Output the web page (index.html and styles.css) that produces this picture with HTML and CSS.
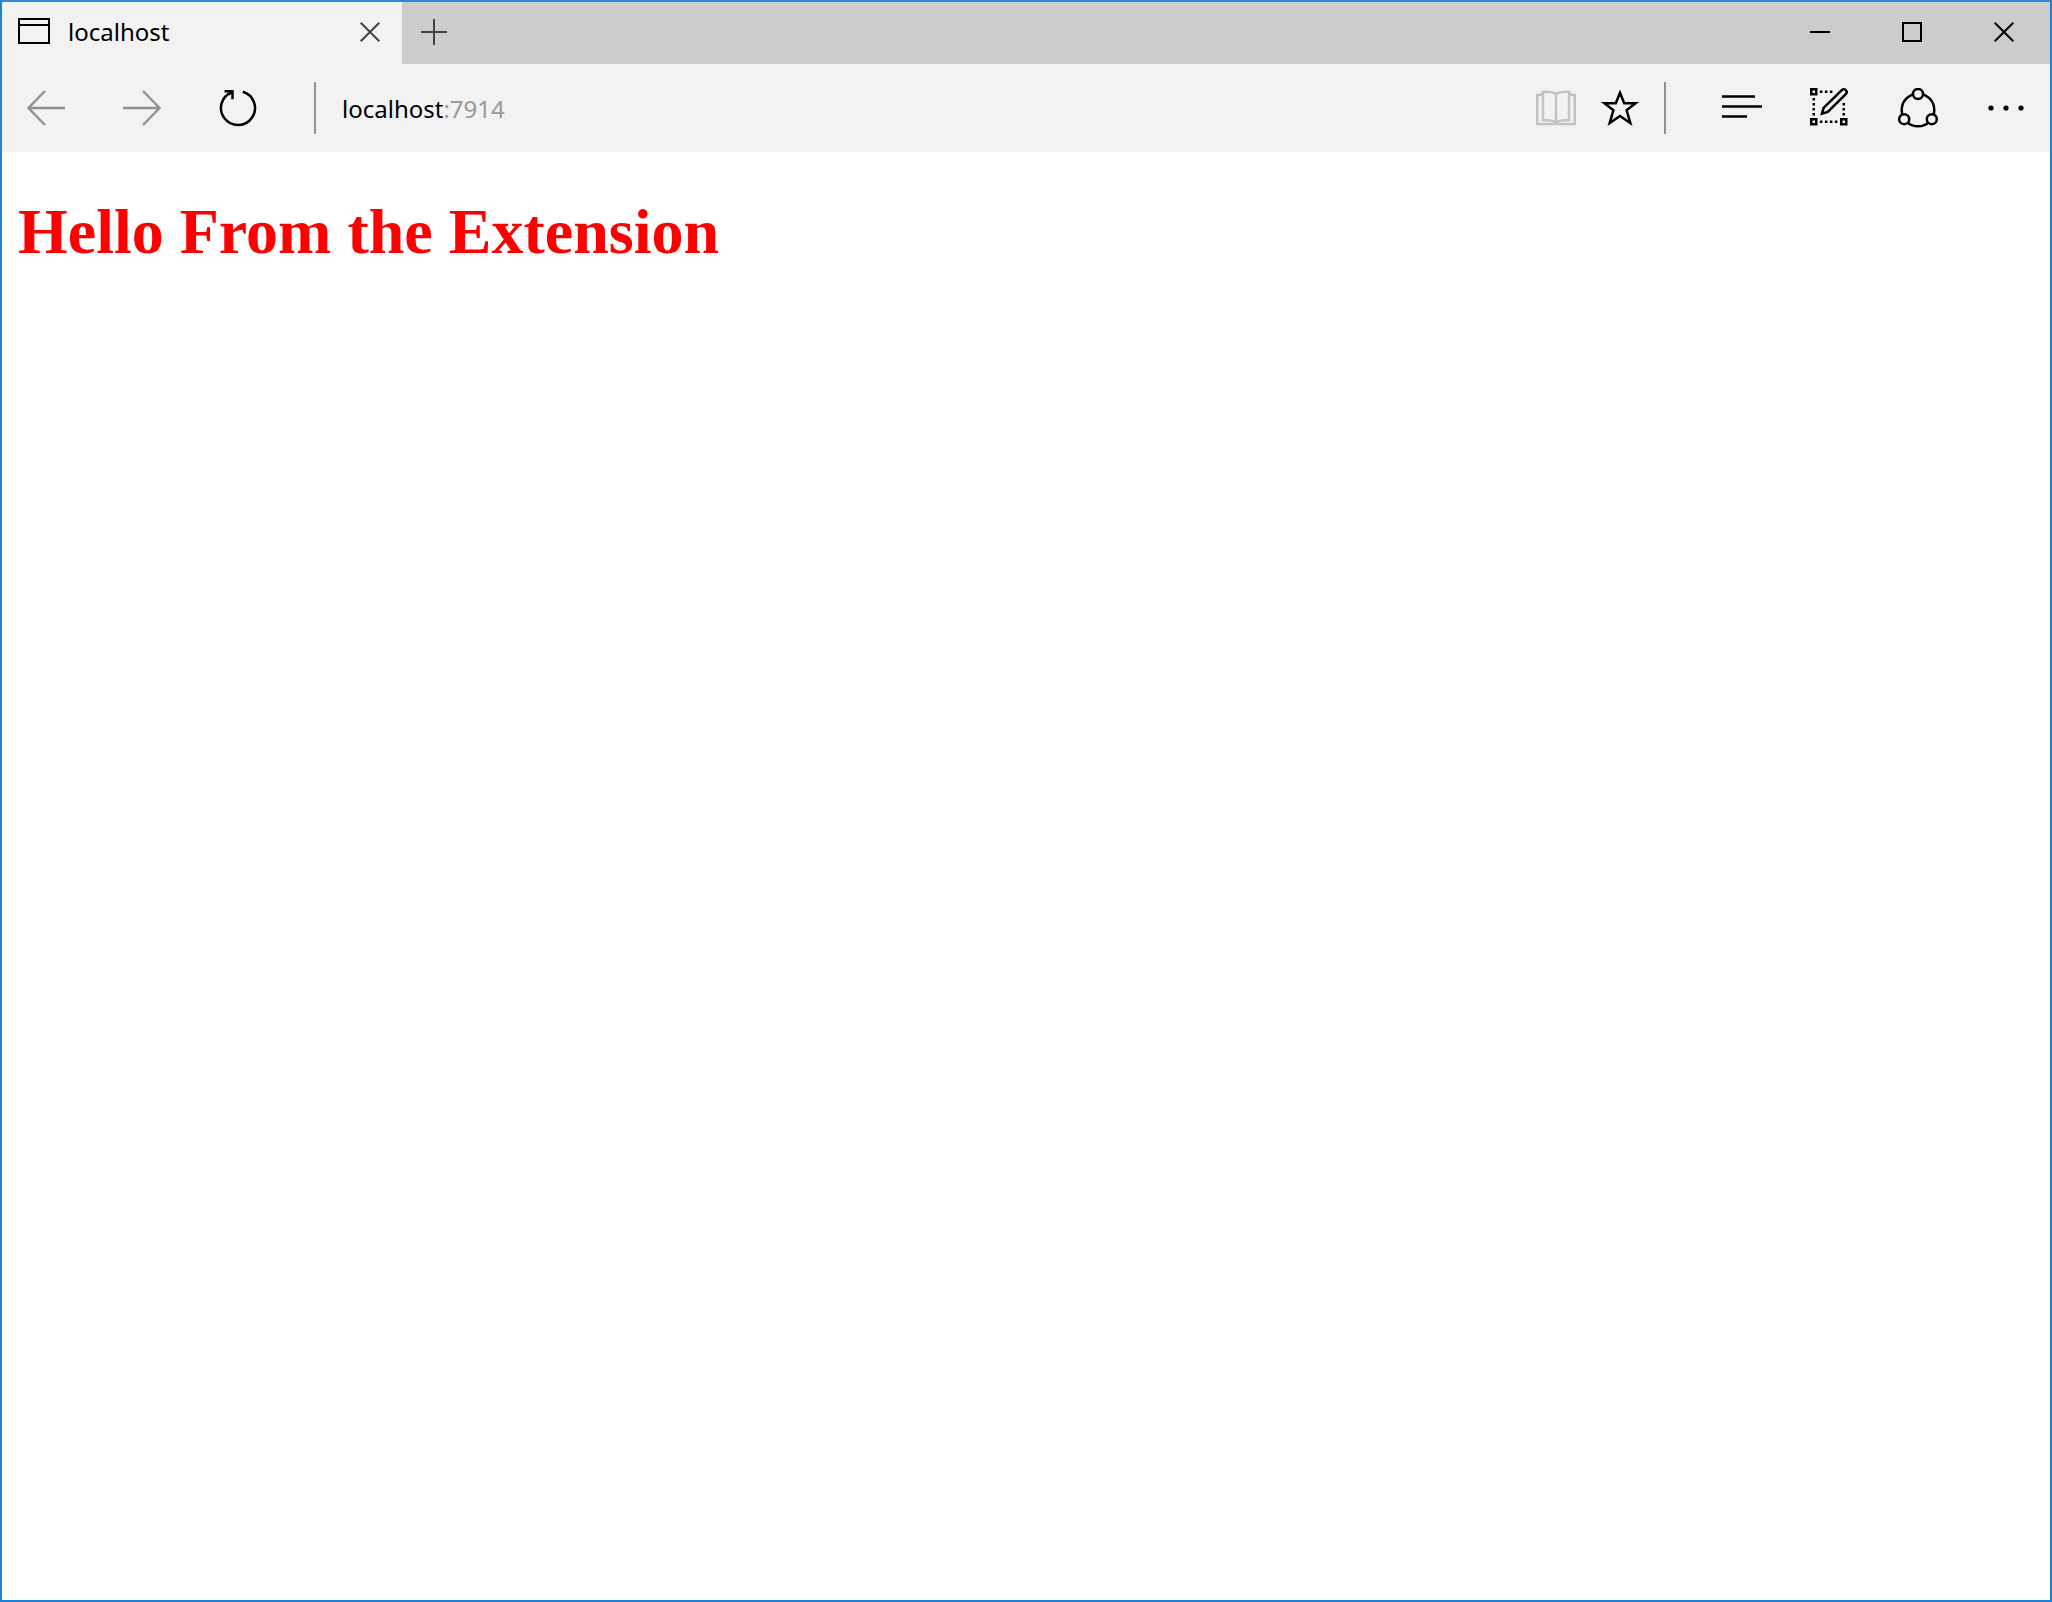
FILE: index.html
```html
<!DOCTYPE html>
<html lang="en">
<head>
<meta charset="utf-8">
<title>localhost</title>
<link rel="stylesheet" href="styles.css">
</head>
<body>
<div class="window">
  <header class="tabstrip">
    <div class="tab">
      <svg class="tab-icon" width="32" height="28" viewBox="0 0 32 28"><path d="M1 1H31V25H1ZM1 7H31"/></svg>
      <span class="tab-title">localhost</span>
      <button class="tab-close" type="button" aria-label="Close tab">
        <svg class="thin" width="20" height="20" viewBox="0 0 20 20"><path d="M.7 .7L19.3 19.3M19.3 .7L.7 19.3"/></svg>
      </button>
    </div>
    <button class="new-tab" type="button" aria-label="New tab">
      <svg class="thin" width="26" height="26" viewBox="0 0 26 26"><path d="M13 0V26M0 13H26"/></svg>
    </button>
    <div class="window-controls">
      <button class="control" type="button" aria-label="Minimize">
        <svg width="20" height="20" viewBox="0 0 20 20"><path d="M0 10H20"/></svg>
      </button>
      <button class="control" type="button" aria-label="Maximize">
        <svg width="20" height="20" viewBox="0 0 20 20"><path d="M1 1H19V19H1Z"/></svg>
      </button>
      <button class="control" type="button" aria-label="Close">
        <svg width="20" height="20" viewBox="0 0 20 20"><path d="M.7 .7L19.3 19.3M19.3 .7L.7 19.3"/></svg>
      </button>
    </div>
  </header>

  <nav class="toolbar">
    <div class="navigation">
      <button class="tool disabled" type="button" aria-label="Back" disabled>
        <svg class="heavy" width="40" height="40" viewBox="0 0 40 40"><path d="M39 20H3M19 3L2.500 20L19 37"/></svg>
      </button>
      <button class="tool disabled" type="button" aria-label="Forward" disabled>
        <svg class="heavy" width="40" height="40" viewBox="0 0 40 40"><path d="M1 20H37M21 3L37.500 20L21 37"/></svg>
      </button>
      <button class="tool" type="button" aria-label="Refresh">
        <svg class="heavy" width="40" height="40" viewBox="0 0 40 40"><path d="M24.800 3.700A17 17 0 1 1 14 4.100"/><path d="M6.500 3.200H14.500V11.200M10.500 6.500L14.500 3.200"/></svg>
      </button>
    </div>
    <span class="separator"></span>
    <div class="address">
      <input class="host" type="text" value="localhost" aria-label="Address" spellcheck="false">
      <span class="port">:7914</span>
    </div>
    <button class="tool compact faded" type="button" aria-label="Reading view" disabled>
      <svg class="heavy" width="40" height="40" viewBox="0 0 40 40"><path d="M6 4.500V7H1.250V36H38.750V7H34V4.500M20 6C17 3.500 13 3.500 7 3.700V32C13 32 17 32 20 34.500C23 32 27 32 33 32V3.700C27 3.500 23 3.500 20 6V34"/></svg>
    </button>
    <button class="tool compact" type="button" aria-label="Add to favorites">
      <svg width="40" height="40" viewBox="0 0 40 40"><path class="star" d="M20 4.800L24.200 15.300H35.500L26.600 22.300L30.300 35L20 28L9.700 35L13.400 22.300L4.500 15.300H15.800Z"/></svg>
    </button>
    <span class="separator after-star"></span>
    <button class="tool" type="button" aria-label="Hub">
      <svg width="40" height="40" viewBox="0 0 40 40"><path class="heavy" d="M0 8.600H33M0 18.600H40M0 28.600H25"/></svg>
    </button>
    <button class="tool" type="button" aria-label="Make a web note">
      <svg width="40" height="40" viewBox="0 0 40 40"><path class="heavy" d="M1.250 1.250H6.250V6.250H1.250ZM1.250 31.250H6.250V36.250H1.250ZM31.250 31.250H36.250V36.250H31.250ZM12 25.600L13.600 19.800L31.800 2.200A2.800 2.800 0 0 1 35.800 6.200L17.800 24Z"/><path class="heavy dots" d="M9.900 3.750H23M3.750 9.900V28M33.750 14.900V28M9.900 33.750H28"/></svg>
    </button>
    <button class="tool" type="button" aria-label="Share">
      <svg class="heavy" width="40" height="40" viewBox="0 0 40 40"><circle cx="20" cy="22" r="16.300"/><g class="nodes"><circle cx="20" cy="6" r="5"/><circle cx="6.200" cy="31.200" r="5"/><circle cx="33.800" cy="31.200" r="5"/></g></svg>
    </button>
    <button class="tool" type="button" aria-label="More actions">
      <svg class="solid" width="40" height="40" viewBox="0 0 40 40"><circle cx="5" cy="20" r="2.600"/><circle cx="20" cy="20" r="2.600"/><circle cx="35" cy="20" r="2.600"/></svg>
    </button>
  </nav>

  <main class="page">
    <h1 class="greeting">Hello From the Extension</h1>
  </main>
</div>
</body>
</html>
```
FILE: styles.css
```css
* {
  box-sizing: border-box;
}

body {
  margin: 0;
  font-family: "Noto Sans", "Open Sans", sans-serif;
  font-size: 24px;
  line-height: 32px;
  color: #000;
}

.window {
  min-height: 100vh;
  border: 2px solid #1a82d7;
  border-top-color: #2b89d8;
  background: #fff;
}

button {
  display: flex;
  align-items: center;
  justify-content: center;
  flex: none;
  padding: 0;
  border: 0;
  background: none;
  color: #000;
}

svg {
  flex: none;
  fill: none;
  stroke: currentColor;
  stroke-width: 2;
}

.tabstrip {
  display: flex;
  height: 62px;
  background: #ccc;
}

.tab {
  display: flex;
  align-items: center;
  width: 400px;
  padding: 0 0 2px 16px;
  background: #f2f2f2;
}

.tab-title {
  flex: 1;
  margin-left: 18px;
}

.tab-close {
  width: 64px;
  height: 60px;
}

.new-tab {
  width: 64px;
  padding-bottom: 2px;
}

.thin {
  color: #444;
}

.window-controls {
  display: flex;
  margin-left: auto;
}

.control {
  width: 92px;
  padding-bottom: 2px;
}

.toolbar {
  display: flex;
  align-items: center;
  height: 88px;
  background: #f2f2f2;
}

.navigation {
  display: flex;
  gap: 8px;
}

.tool {
  width: 88px;
  height: 88px;
}

.compact {
  width: 64px;
}

.disabled {
  color: #919191;
}

.faded {
  color: #c3c3c3;
}

.separator {
  flex: none;
  width: 2px;
  height: 52px;
  margin: 0 32px;
  background: #919191;
}

.after-star {
  margin-left: 12px;
}

.address {
  display: flex;
  flex: 1;
  align-items: center;
  margin-left: -6px;
  padding-top: 2px;
}

.host {
  field-sizing: content;
  padding: 0;
  border: 0;
  outline: 0;
  background: none;
  color: #000;
  font: inherit;
}

.port {
  color: #999;
}

.heavy,
.star,
.nodes {
  stroke-width: 2.5;
}

.star {
  stroke-miterlimit: 10;
}

.dots {
  stroke-dasharray: 2.5 2.5;
}

.nodes {
  fill: #f2f2f2;
}

.solid {
  fill: currentColor;
  stroke: none;
}

.page {
  padding: 43px 16px;
}

.greeting {
  margin: 0;
  font-family: "Liberation Serif", "Times New Roman", serif;
  font-size: 64px;
  line-height: 74px;
  font-weight: bold;
  color: #f00;
}
```
